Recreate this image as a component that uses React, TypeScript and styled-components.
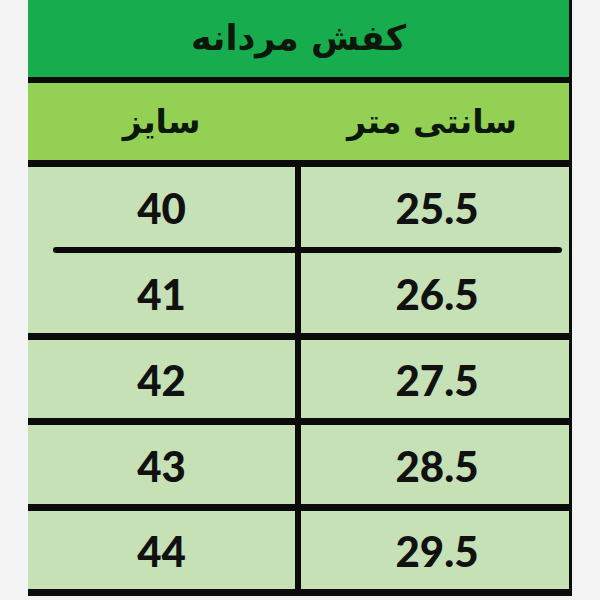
import React from "react";
import styled, { createGlobalStyle } from "styled-components";

const Global = createGlobalStyle`
  html, body { margin: 0; padding: 0; background: #f3f3f3; }
  body { width: 600px; height: 600px; overflow: hidden; }
`;

const LINE = "#0b0b0b";
const ROW_BG = "#c6e1b6";

const Page = styled.div`
  width: 600px;
  height: 600px;
  padding-left: 28px;
  box-sizing: border-box;
  background: #f3f3f3;
`;

const Table = styled.div`
  width: 544px;
  display: flex;
  flex-direction: column;
  border-right: 3px solid ${LINE};
  box-sizing: border-box;
`;

const Title = styled.div`
  height: 83px;
  box-sizing: border-box;
  background: #17ad4e;
  border-bottom: 6px solid ${LINE};
  display: flex;
  align-items: center;
  justify-content: center;
  font-family: "DejaVu Sans", "Noto Sans", sans-serif;
  font-weight: 700;
  font-size: 35px;
  color: #0c180c;
  direction: rtl;
  padding-bottom: 2px;
`;

const HeaderRow = styled.div`
  height: 84px;
  box-sizing: border-box;
  background: #93d053;
  border-bottom: 7px solid ${LINE};
  display: flex;
`;

const HeadCell = styled.div<{ $w?: number }>`
  ${(p) => (p.$w ? `width: ${p.$w}px;` : "flex: 1;")}
  display: flex;
  align-items: center;
  justify-content: center;
  font-family: "DejaVu Sans", "Noto Sans", sans-serif;
  font-weight: 700;
  font-size: 33px;
  color: #0c180c;
  direction: rtl;
`;

const Row = styled.div<{ $h: number; $line: number }>`
  height: ${(p) => p.$h}px;
  background: ${ROW_BG};
  border-bottom: ${(p) => p.$line}px solid ${LINE};
  display: flex;
`;

const Cell = styled.div<{ $left?: boolean }>`
  ${(p) => (p.$left ? `width: 267px; border-right: 6px solid ${LINE};` : "flex: 1;")}
  display: flex;
  align-items: center;
  justify-content: center;
  font-family: Lato, "Liberation Sans", sans-serif;
  font-weight: 900;
  font-size: 42px;
  color: #111;
  padding-top: 2px;
  box-sizing: content-box;
`;

const NumCell = styled(Cell)<{ $shift?: number }>`
  padding-left: ${(p) => p.$shift ?? 0}px;
`;

const Separator = styled.div`
  height: 6px;
  background: ${ROW_BG};
  display: flex;
`;

const SepPart = styled.div<{ $left?: boolean }>`
  ${(p) => (p.$left ? `width: 242px; margin-left: 25px;` : "flex: 1; margin-right: 7px;")}
  background: ${LINE};
  border-radius: ${(p) => (p.$left ? "3px 0 0 3px" : "0 3px 3px 0")};
`;

const Divider = styled.div`
  width: 6px;
  background: ${LINE};
`;

const rows = [
  { size: "40", cm: "25.5", h: 80, line: 0 },
  { size: "41", cm: "26.5", h: 80, line: 7 },
  { size: "42", cm: "27.5", h: 78, line: 7 },
  { size: "43", cm: "28.5", h: 79, line: 7 },
  { size: "44", cm: "29.5", h: 78, line: 7 },
];

export default function App() {
  return (
    <>
      <Global />
      <Page>
        <Table>
          <Title>کفش مردانه</Title>
          <HeaderRow>
            <HeadCell $w={267}>سایز</HeadCell>
            <HeadCell>سانتی متر</HeadCell>
          </HeaderRow>
          {rows.map((r, i) => (
            <React.Fragment key={r.size}>
              <Row $h={r.h} $line={r.line}>
                <Cell $left>{r.size}</Cell>
                <NumCell $shift={4}>{r.cm}</NumCell>
              </Row>
              {i === 0 && (
                <Separator>
                  <SepPart $left />
                  <Divider />
                  <SepPart />
                </Separator>
              )}
            </React.Fragment>
          ))}
        </Table>
      </Page>
    </>
  );
}
